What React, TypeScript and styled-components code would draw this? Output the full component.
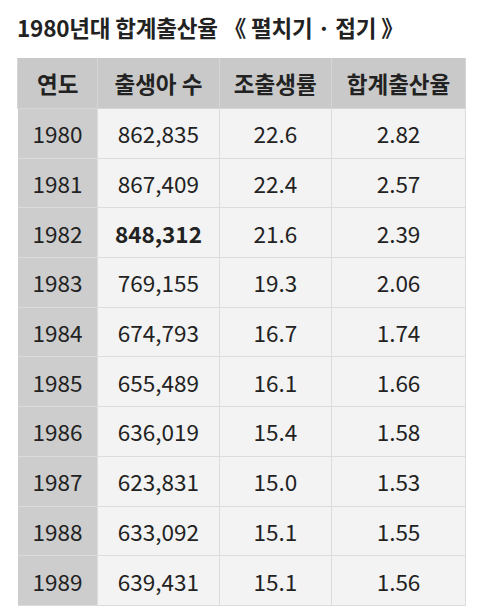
import styled, { createGlobalStyle } from "styled-components";

interface Row {
  year: string;
  births: string;
  crude: string;
  tfr: string;
  strong?: boolean;
}

const rows: Row[] = [
  { year: "1980", births: "862,835", crude: "22.6", tfr: "2.82" },
  { year: "1981", births: "867,409", crude: "22.4", tfr: "2.57" },
  { year: "1982", births: "848,312", crude: "21.6", tfr: "2.39", strong: true },
  { year: "1983", births: "769,155", crude: "19.3", tfr: "2.06" },
  { year: "1984", births: "674,793", crude: "16.7", tfr: "1.74" },
  { year: "1985", births: "655,489", crude: "16.1", tfr: "1.66" },
  { year: "1986", births: "636,019", crude: "15.4", tfr: "1.58" },
  { year: "1987", births: "623,831", crude: "15.0", tfr: "1.53" },
  { year: "1988", births: "633,092", crude: "15.1", tfr: "1.55" },
  { year: "1989", births: "639,431", crude: "15.1", tfr: "1.56" },
];

const GlobalStyle = createGlobalStyle`
  body {
    margin: 0;
    background: #fff;
    font-family: "Noto Sans CJK KR", "Noto Sans", sans-serif;
    color: #222;
  }
`;

const Page = styled.div`
  padding: 12px 21px 0 17px;
`;

const Title = styled.h3`
  margin: 0 0 16px;
  font-size: 22.5px;
  font-weight: 700;
  line-height: 30px;
  letter-spacing: -0.2px;
  color: #222;

  span {
    margin-left: 6px;
  }
`;

const Table = styled.table`
  width: 449px;
  border-collapse: collapse;
  font-size: 22.5px;
  text-align: center;
`;

const HeadCell = styled.th<{ $w: number }>`
  width: ${(p) => p.$w}px;
  height: 50px;
  padding: 0;
  background: #c9c9c9;
  border: 1px solid #d6d6d6;
  border-top: none;
  font-weight: 700;
  color: #222;
`;

const Cell = styled.td<{ $year?: boolean; $strong?: boolean }>`
  height: 48.7px;
  padding: 0;
  background: ${(p) => (p.$year ? "#cdcdcd" : "#f3f3f3")};
  border: 1px solid #dcdcdc;
  border-left: ${(p) => (p.$year ? "none" : "1px solid #dcdcdc")};
  font-weight: ${(p) => (p.$strong ? 700 : 400)};
  color: #222;
`;

export default function App() {
  return (
    <>
      <GlobalStyle />
      <Page>
        <Title>
          1980년대 합계출산율<span>《 펼치기 · 접기 》</span>
        </Title>
        <Table>
          <thead>
            <tr>
              <HeadCell $w={80}>연도</HeadCell>
              <HeadCell $w={121}>출생아 수</HeadCell>
              <HeadCell $w={113}>조출생률</HeadCell>
              <HeadCell $w={135}>합계출산율</HeadCell>
            </tr>
          </thead>
          <tbody>
            {rows.map((r) => (
              <tr key={r.year}>
                <Cell $year>{r.year}</Cell>
                <Cell $strong={r.strong}>{r.births}</Cell>
                <Cell>{r.crude}</Cell>
                <Cell>{r.tfr}</Cell>
              </tr>
            ))}
          </tbody>
        </Table>
      </Page>
    </>
  );
}
